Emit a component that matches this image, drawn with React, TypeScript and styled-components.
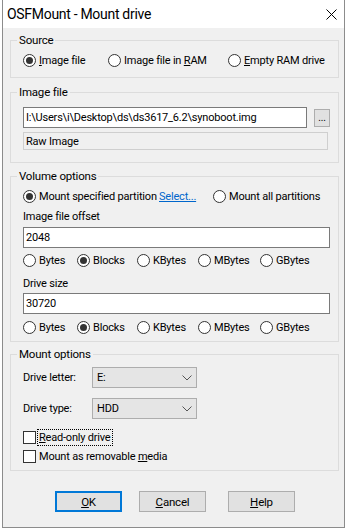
import React from 'react'
import styled, { createGlobalStyle } from 'styled-components'

const GlobalStyle = createGlobalStyle`
  html, body {
    margin: 0;
    padding: 0;
    background: #ffffff;
  }
  body {
    font-family: Roboto, "Liberation Sans", Arial, sans-serif;
    font-size: 11px;
    letter-spacing: -0.2px;
    color: #000;
  }
  * { box-sizing: border-box; }
`

const Desktop = styled.div`
  width: 350px;
  height: 531px;
  padding-left: 2px;
  background: #ffffff;
  overflow: hidden;
`

const Window = styled.div`
  width: 343px;
  height: 528px;
  border: 1px solid #8c8c8c;
  border-top: none;
  background: #f0f0f0;
  display: flex;
  flex-direction: column;
`

const TitleBar = styled.div`
  height: 28px;
  flex: none;
  background: #ffffff;
  display: flex;
  align-items: center;
  justify-content: space-between;
  padding: 0 7px 0 4px;
`

const Title = styled.div`
  font-size: 14px;
  letter-spacing: -0.3px;
`

const Body = styled.div`
  flex: 1;
  padding: 5px 5px 0 7px;
  display: flex;
  flex-direction: column;
`

const Group = styled.fieldset<{ $mt?: number; $pb: number }>`
  margin: ${p => p.$mt ?? 0}px 0 0 0;
  padding: 0 8px ${p => p.$pb}px 12px;
  border: 1px solid #dcdcdc;
  min-width: 0;
`

const Legend = styled.legend`
  padding: 0 2px;
  margin-left: -6px;
  line-height: 14px;
  font-size: 11.5px;
`

const Row = styled.div<{ $mt?: number }>`
  display: flex;
  align-items: center;
  height: 16px;
  margin-top: ${p => p.$mt ?? 0}px;
`

const Option = styled.label<{ $w?: number }>`
  display: inline-flex;
  align-items: center;
  gap: 3px;
  white-space: nowrap;
  flex: none;
  width: ${p => (p.$w ? `${p.$w}px` : 'auto')};
`

const RadioCircle = styled.span<{ $on?: boolean }>`
  width: 13px;
  height: 13px;
  border-radius: 50%;
  border: 1px solid #333;
  background: #fff;
  flex: none;
  display: flex;
  align-items: center;
  justify-content: center;
  &::after {
    content: '';
    width: 7px;
    height: 7px;
    border-radius: 50%;
    background: ${p => (p.$on ? '#333' : 'transparent')};
  }
`

const CheckSquare = styled.span`
  width: 13px;
  height: 13px;
  border: 1px solid #333;
  background: #fff;
  flex: none;
`

const Focus = styled.span`
  outline: 1px dotted #000;
  outline-offset: 1px;
`

const Key = styled.span`
  text-decoration: underline;
`

const Link = styled.a`
  color: #0066cc;
  text-decoration: underline;
  flex: none;
  width: 54px;
`

const FieldLabel = styled.div<{ $mt: number }>`
  line-height: 14px;
  margin-top: ${p => p.$mt}px;
`

const TextBox = styled.div<{ $mt: number; $w?: number; $h?: number; $disabled?: boolean }>`
  margin-top: ${p => p.$mt}px;
  width: ${p => (p.$w ? `${p.$w}px` : '100%')};
  height: ${p => p.$h ?? 21}px;
  border: 1px solid ${p => (p.$disabled ? '#cfcfcf' : '#7a7a7a')};
  background: ${p => (p.$disabled ? '#f0f0f0' : '#ffffff')};
  display: flex;
  align-items: center;
  padding-left: 2px;
  white-space: nowrap;
  overflow: hidden;
  flex: none;
`

const PathRow = styled.div`
  display: flex;
  align-items: center;
  gap: 7px;
  margin-top: 8px;
`

const BrowseButton = styled.div`
  width: 18px;
  height: 18px;
  border: 1px solid #adadad;
  background: #e1e1e1;
  display: flex;
  align-items: flex-end;
  justify-content: center;
  padding-bottom: 3px;
  font-size: 10px;
  line-height: 10px;
`

const SelectRow = styled.div<{ $mt: number }>`
  display: grid;
  grid-template-columns: 69px 105px;
  align-items: center;
  margin-top: ${p => p.$mt}px;
`

const Select = styled.div`
  height: 21px;
  border: 1px solid #adadad;
  background: #e5e5e5;
  display: flex;
  align-items: center;
  justify-content: space-between;
  padding: 0 4px 0 4px;
`

const ButtonRow = styled.div`
  display: flex;
  margin-top: 20px;
  padding-left: 45px;
`

const Button = styled.div<{ $ml?: number; $default?: boolean }>`
  width: 67px;
  height: 21px;
  margin-left: ${p => p.$ml ?? 0}px;
  border: ${p => (p.$default ? '2px solid #0078d7' : '1px solid #adadad')};
  background: #e1e1e1;
  display: flex;
  align-items: center;
  justify-content: center;
  font-size: 11.5px;
`

const Chevron = () => (
  <svg width="10" height="6" viewBox="0 0 10 6">
    <polyline points="0.5,0.5 5,5 9.5,0.5" fill="none" stroke="#555" strokeWidth="1" />
  </svg>
)

const CloseIcon = () => (
  <svg width="11" height="11" viewBox="0 0 11 11">
    <line x1="0.5" y1="0.5" x2="10.5" y2="10.5" stroke="#000" strokeWidth="1" />
    <line x1="10.5" y1="0.5" x2="0.5" y2="10.5" stroke="#000" strokeWidth="1" />
  </svg>
)

const Radio = ({ on, w, children }: { on?: boolean; w?: number; children: React.ReactNode }) => (
  <Option $w={w}>
    <RadioCircle $on={on} />
    <span>{children}</span>
  </Option>
)

const units = ['Bytes', 'Blocks', 'KBytes', 'MBytes', 'GBytes']
const unitWidths = [54, 60, 61, 62, undefined]

const UnitRow = ({ mt }: { mt: number }) => (
  <Row $mt={mt}>
    {units.map((u, i) => (
      <Radio key={u} on={u === 'Blocks'} w={unitWidths[i]}>
        {u}
      </Radio>
    ))}
  </Row>
)

export default function App() {
  return (
    <>
      <GlobalStyle />
      <Desktop>
        <Window>
          <TitleBar>
            <Title>OSFMount - Mount drive</Title>
            <CloseIcon />
          </TitleBar>
          <Body>
            <Group $pb={9}>
              <Legend>Source</Legend>
              <Row $mt={5}>
                <Radio on w={85}>
                  <Key>I</Key>mage file
                </Radio>
                <Radio w={120}>
                  Image file in <Key>R</Key>AM
                </Radio>
                <Radio>
                  <Key>E</Key>mpty RAM drive
                </Radio>
              </Row>
            </Group>

            <Group $mt={7} $pb={12}>
              <Legend>Image file</Legend>
              <PathRow>
                <TextBox $mt={0} $w={284}>
                  I:\Users\i\Desktop\ds\ds3617_6.2\synoboot.img
                </TextBox>
                <BrowseButton>...</BrowseButton>
              </PathRow>
              <TextBox $mt={4} $w={305} $h={18} $disabled>
                Raw Image
              </TextBox>
            </Group>

            <Group $mt={6} $pb={6}>
              <Legend>Volume options</Legend>
              <Row $mt={5}>
                <Radio on w={136}>
                  Mount specified partition
                </Radio>
                <Link>Select...</Link>
                <Radio>Mount all partitions</Radio>
              </Row>
              <FieldLabel $mt={6}>Image file offset</FieldLabel>
              <TextBox $mt={3}>2048</TextBox>
              <UnitRow mt={4} />
              <FieldLabel $mt={9}>Drive size</FieldLabel>
              <TextBox $mt={2}>30720</TextBox>
              <UnitRow mt={5} />
            </Group>

            <Group $mt={5} $pb={6}>
              <Legend>Mount options</Legend>
              <SelectRow $mt={6}>
                <span>Drive letter:</span>
                <Select>
                  <span>E:</span>
                  <Chevron />
                </Select>
              </SelectRow>
              <SelectRow $mt={10}>
                <span>Drive type:</span>
                <Select>
                  <span>HDD</span>
                  <Chevron />
                </Select>
              </SelectRow>
              <Row $mt={10}>
                <Option>
                  <CheckSquare />
                  <Focus>
                    <Key>R</Key>ead-only drive
                  </Focus>
                </Option>
              </Row>
              <Row $mt={3}>
                <Option>
                  <CheckSquare />
                  <span>
                    Mount as removable <Key>m</Key>edia
                  </span>
                </Option>
              </Row>
            </Group>

            <ButtonRow>
              <Button $default>
                <span>
                  <Key>O</Key>K
                </span>
              </Button>
              <Button $ml={17}>
                <span>
                  <Key>C</Key>ancel
                </span>
              </Button>
              <Button $ml={22}>
                <span>
                  <Key>H</Key>elp
                </span>
              </Button>
            </ButtonRow>
          </Body>
        </Window>
      </Desktop>
    </>
  )
}
